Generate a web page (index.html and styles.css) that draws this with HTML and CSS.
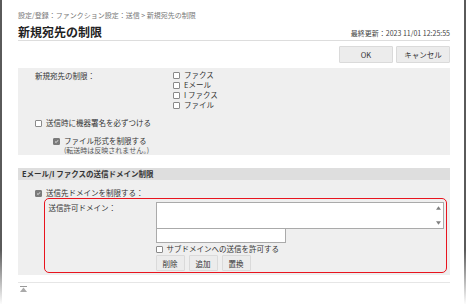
FILE: index.html
```html
<!DOCTYPE html>
<html lang="ja">
<head>
    <meta charset="UTF-8">
    <title>新規宛先の制限</title>
    <link rel="stylesheet" href="styles.css">
</head>
<body>
    <div class="frame">
        <div class="crumb">設定/登録：ファンクション設定：送信 &gt; 新規宛先の制限</div>
        <div class="head">
            <h1>新規宛先の制限</h1>
            <span class="updated">最終更新：2023 11/01 12:25:55</span>
        </div>
        <div class="actions">
            <button class="btn">OK</button>
            <button class="btn">キャンセル</button>
        </div>

        <div class="panel">
            <div class="row">
                <div class="lbl">新規宛先の制限：</div>
                <div class="opts">
                    <label class="chk"><span class="box"></span>ファクス</label>
                    <label class="chk"><span class="box"></span>Eメール</label>
                    <label class="chk"><span class="box"></span>I ファクス</label>
                    <label class="chk"><span class="box"></span>ファイル</label>
                </div>
            </div>
            <label class="chk sign"><span class="box"></span>送信時に機器署名を必ずつける</label>
            <div class="sub">
                <label class="chk"><span class="box on"><svg viewBox="0 0 7 7"><path d="M1.5 3.6 L3 5 L5.6 1.8" fill="none" stroke="#fff" stroke-width="1.1"/></svg></span>ファイル形式を制限する</label>
                <div class="note">(転送時は反映されません。)</div>
            </div>
        </div>

        <div class="section-title">Eメール/I ファクスの送信ドメイン制限</div>
        <div class="panel p2">
            <label class="chk"><span class="box on"><svg viewBox="0 0 7 7"><path d="M1.5 3.6 L3 5 L5.6 1.8" fill="none" stroke="#fff" stroke-width="1.1"/></svg></span>送信先ドメインを制限する：</label>
            <div class="domain">
                <div class="lbl2">送信許可ドメイン：</div>
                <div class="fields">
                    <div class="list">
                        <div class="scroll">
                            <svg viewBox="0 0 6 4"><path d="M3 0 L6 4 L0 4 Z" fill="#808080"/></svg>
                            <svg viewBox="0 0 6 4"><path d="M0 0 L6 0 L3 4 Z" fill="#808080"/></svg>
                        </div>
                    </div>
                    <div class="input"></div>
                    <label class="chk big"><span class="box"></span>サブドメインへの送信を許可する</label>
                    <div class="btns">
                        <button class="btn small">削除</button>
                        <button class="btn small">追加</button>
                        <button class="btn small">置換</button>
                    </div>
                </div>
            </div>
        </div>

        <div class="foot">
            <svg class="top" viewBox="0 0 7 6"><path d="M0 0.5 H7" stroke="#999" stroke-width="1"/><path d="M3.5 1.5 L7 6 L0 6 Z" fill="#aaa"/></svg>
        </div>
    </div>
</body>
</html>
```

FILE: styles.css
```css
body { margin: 0; font-family: "Noto Sans CJK JP", "Noto Sans", sans-serif; color: #333; font-size: 7.5px; }
.frame { width: 432px; min-height: 304px; box-sizing: border-box; width: 466px; padding: 10px 14px 0 16px; border-style: solid; border-width: 0 2px; border-image: linear-gradient(#5a5a5a 0, #5a5a5a 82%, #fff 100%) 1; }
.crumb { line-height: 10px; font-size: 7px; color: #777; }
.head { display: flex; justify-content: space-between; align-items: flex-end; height: 17px; margin-top: 3px; border-bottom: 1px solid #ddd; padding-bottom: 0; }
.head h1 { margin: 0; font-size: 12px; line-height: 16px; font-weight: bold; color: #222; }
.updated { font-size: 7px; line-height: 14px; color: #444; }
.actions { display: flex; justify-content: flex-end; gap: 3px; margin-top: 5px; }
.btn { font-family: inherit; font-size: 7.5px; color: #333; background: #ececec; border: 1px solid #dadada; border-radius: 1px; padding: 0; height: 17px; width: 54px; }
.btn.small { width: 29px; height: 16px; }

.panel { background: #efefef; margin-top: 5px; padding: 2px 0 1px 17px; }
.row { display: flex; }
.lbl { width: 138px; line-height: 12px; margin-top: 0; }
.opts { display: flex; flex-direction: column; }
.chk { display: flex; align-items: center; line-height: 10px; white-space: nowrap; }
.box { width: 7px; height: 7px; box-sizing: border-box; border: 1px solid #8a8a8a; background: #fff; border-radius: 1px; margin-right: 4px; display: flex; }
.box.on { background: #7a7a7a; border-color: #7a7a7a; }
.box svg { width: 5px; height: 5px; }
.sign { margin-top: 8px; }
.sub { margin-top: 8px; padding-left: 18px; }
.note { padding-left: 11px; line-height: 8px; font-size: 7px; color: #555; }

.section-title { margin-top: 13px; background: #dedede; height: 12px; line-height: 12px; padding-left: 4px; font-weight: bold; color: #333; }
.panel.p2 { margin-top: 0; padding: 8px 0 2px 17px; }
.domain { display: flex; margin: 0 3px 0 9px; border: 1.5px solid #e8141e; border-radius: 5px; padding: 3px 1px 1px 3.5px; }
.lbl2 { width: 107px; padding-top: 1px; line-height: 10px; }
.fields { display: flex; flex-direction: column; }
.list { width: 288px; height: 27px; box-sizing: border-box; border: 1px solid #aaa; background: #fff; display: flex; justify-content: flex-end; }
.scroll { width: 9px; display: flex; flex-direction: column; justify-content: space-between; align-items: center; padding: 3px 0; }
.scroll svg { width: 5px; height: 4px; }
.input { width: 130px; height: 14px; box-sizing: border-box; border: 1px solid #aaa; background: #fff; border-top: 0; }
.chk.big { margin-top: 1px; }
.btns { display: flex; gap: 4px; margin-top: 1px; }

.foot { margin-top: 7px; border-top: 1px solid #e6e6e6; padding: 3px 0 0 2px; }
.top { width: 7px; height: 6px; display: block; }
```
